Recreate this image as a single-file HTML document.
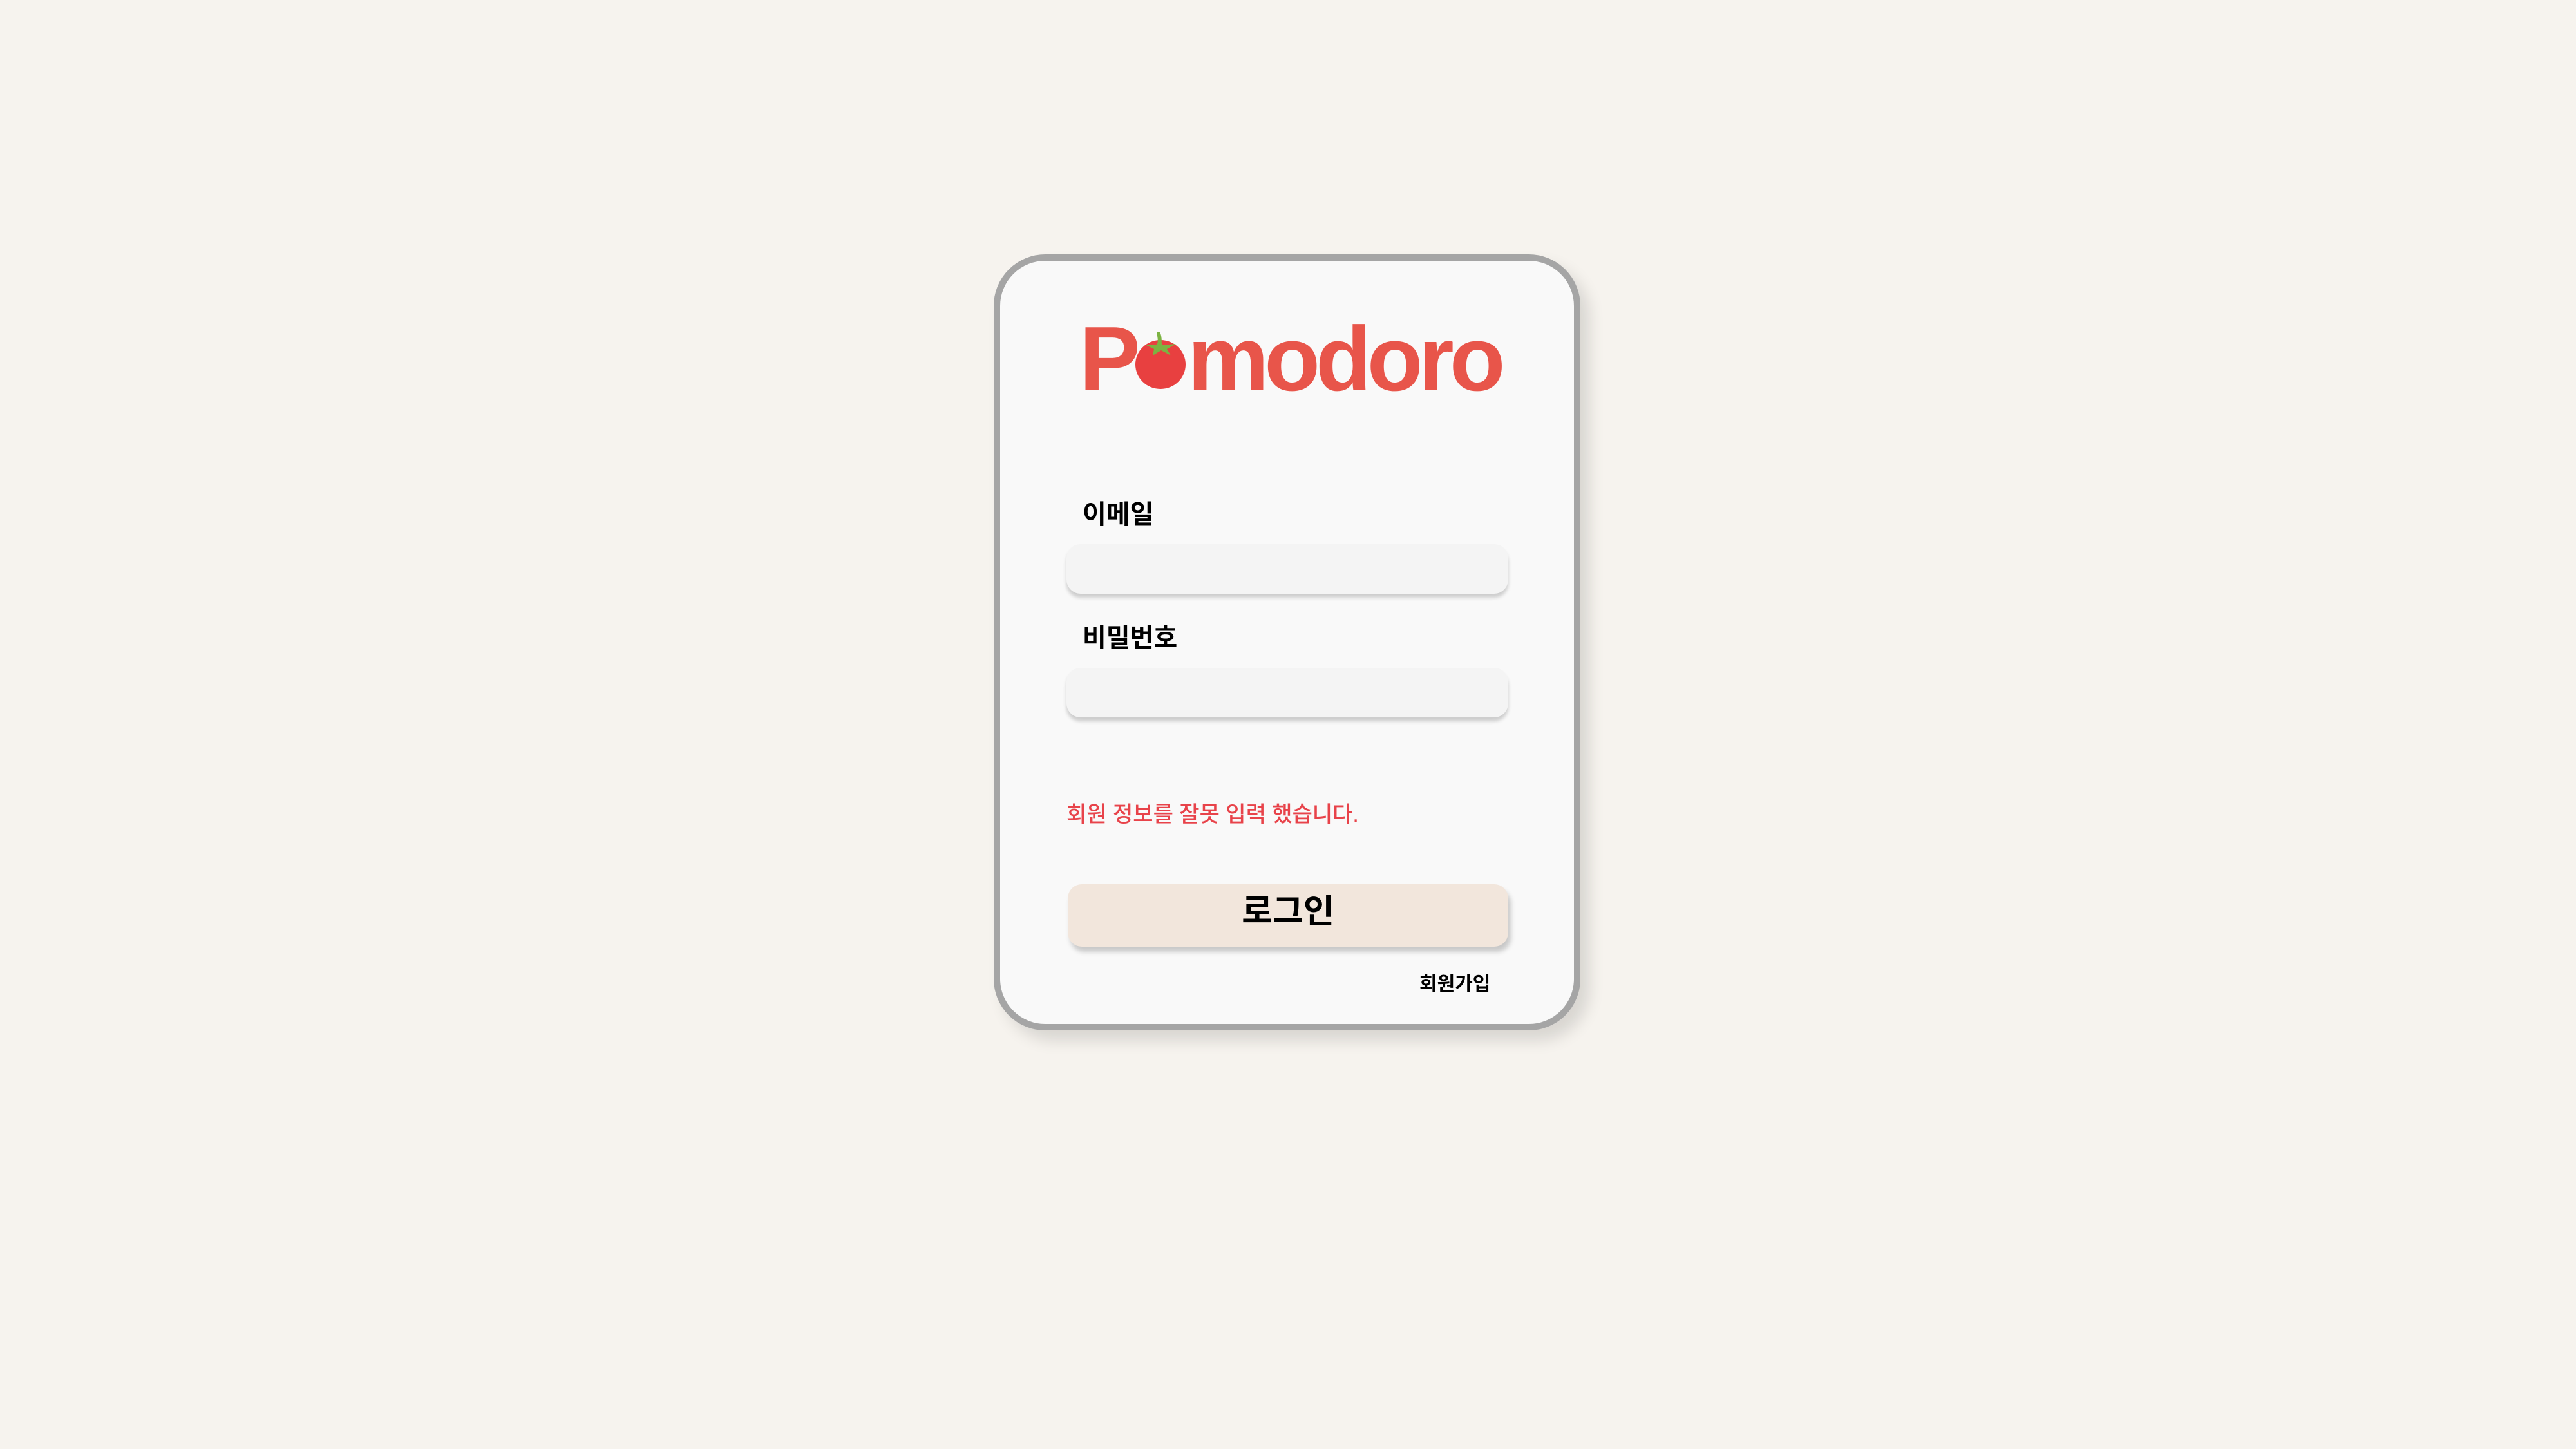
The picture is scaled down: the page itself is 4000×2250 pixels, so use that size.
<!DOCTYPE html>
<html><head><meta charset="utf-8"><style>
html,body{margin:0;padding:0}
body{width:4000px;height:2250px;background:#f6f3ee;position:relative;overflow:hidden;font-family:"Liberation Sans","Noto Sans CJK KR",sans-serif}
.card{position:absolute;left:1543px;top:395px;width:891px;height:1185px;border:10px solid #a5a5a5;border-radius:80px;background:#f9f9f9;box-shadow:14px 16px 24px rgba(0,0,0,0.12)}
.abs{position:absolute}
.logo{top:487px;font-size:142px;font-weight:bold;color:#e8554a;line-height:1;font-family:"Liberation Sans",sans-serif;white-space:nowrap}
.lbl{font-size:40px;font-weight:bold;color:#000;line-height:1}
.inp{left:1656px;width:686px;height:77px;background:#f4f4f4;border-radius:22px;box-shadow:0 6px 6px rgba(0,0,0,0.18)}
</style></head><body>
<div class="card"></div>
<div class="abs logo" style="left:1676px">P</div>
<div class="abs logo" style="left:1844px;letter-spacing:-7px">modoro</div>
<svg class="abs" style="left:1740px;top:500px" width="120" height="120" viewBox="0 0 120 120">
<ellipse cx="62" cy="66" rx="39" ry="38" fill="#e84040"/>
<path d="M59 18 Q62 26 60 36" stroke="#7cb342" stroke-width="6" fill="none" stroke-linecap="round"/>
<path d="M40 36 L55 36 L60 28 L66 36 L86 34 L72 42 L78 52 L63 44 L50 52 L52 42 Z" fill="#7cb342"/>
</svg>
<div class="abs lbl" style="left:1681px;top:779px">이메일</div>
<div class="abs inp" style="top:845px"></div>
<div class="abs lbl" style="left:1681px;top:971px">비밀번호</div>
<div class="abs inp" style="top:1037px"></div>
<div class="abs" style="left:1656px;top:1248px;font-size:34px;font-weight:500;color:#e8434a;line-height:1">회원 정보를 잘못 입력 했습니다.</div>
<div class="abs" style="left:1658px;top:1373px;width:684px;height:97px;background:#f2e6dc;border-radius:22px;box-shadow:4px 8px 8px rgba(0,0,0,0.2)"></div>
<div class="abs" style="left:1658px;top:1390px;width:684px;text-align:center;font-size:52px;font-weight:bold;line-height:1">로그인</div>
<div class="abs" style="left:2204px;top:1514px;font-size:30px;font-weight:bold;line-height:1">회원가입</div>
</body></html>
